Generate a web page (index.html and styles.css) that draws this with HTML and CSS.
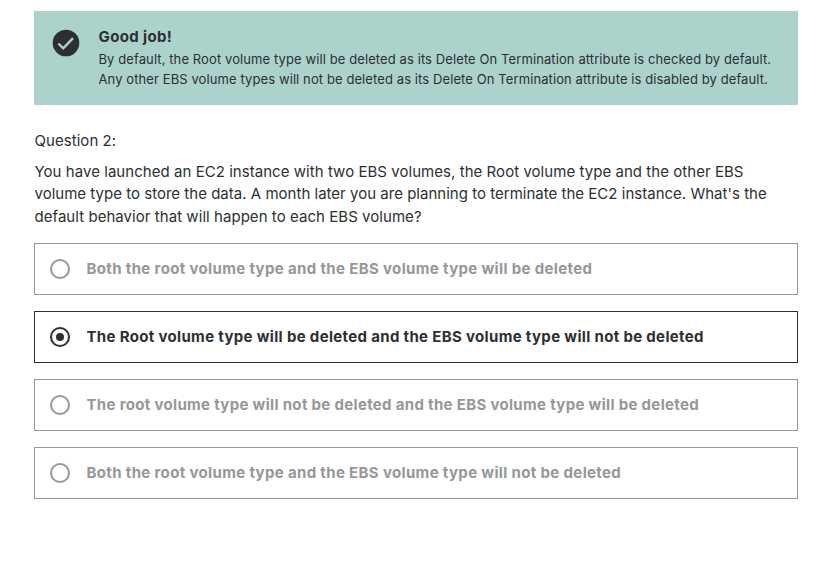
FILE: index.html
```html
<!DOCTYPE html>
<html lang="en">
<head>
<meta charset="utf-8">
<title>Quiz</title>
<link rel="stylesheet" href="styles.css">
</head>
<body>
<main class="quiz">
  <section class="alert">
    <svg class="alert-icon" viewBox="0 0 28 28"><circle cx="14" cy="14" r="13.3"/><path d="M6.4 14.5l4.8 4.8L21 9.1"/></svg>
    <div class="alert-body">
      <h2 class="alert-title"><span class="line">Good job!</span></h2>
      <p class="alert-text"><span class="line">By default, the Root volume type will be deleted as its Delete On Termination attribute is checked by default.</span><span class="line">Any other EBS volume types will not be deleted as its Delete On Termination attribute is disabled by default.</span></p>
    </div>
  </section>
  <div class="question-label"><span class="line">Question 2:</span></div>
  <p class="question"><span class="line q1">You have launched an EC2 instance with two EBS volumes, the Root volume type and the other EBS</span><span class="line q2">volume type to store the data. A month later you are planning to terminate the EC2 instance. What's the</span><span class="line q3">default behavior that will happen to each EBS volume?</span></p>
  <div class="options">
    <div class="option"><span class="radio"></span><span class="line o1">Both the root volume type and the EBS volume type will be deleted</span></div>
    <div class="option selected"><span class="radio"></span><span class="line o2">The Root volume type will be deleted and the EBS volume type will not be deleted</span></div>
    <div class="option"><span class="radio"></span><span class="line o3">The root volume type will not be deleted and the EBS volume type will be deleted</span></div>
    <div class="option"><span class="radio"></span><span class="line o4">Both the root volume type and the EBS volume type will not be deleted</span></div>
  </div>
</main>
</body>
</html>
```
FILE: styles.css
```css
* { box-sizing: border-box; }
body { margin: 0; background: #fff; color: #2d2f31; font-family: Inter, "Liberation Sans", sans-serif; }
h2, p { margin: 0; }
.quiz { width: 764px; margin-left: 34px; padding-top: 11px; }
.line { display: block; width: max-content; white-space: nowrap; }
.alert { display: flex; height: 94px; padding: 16px 18px; gap: 18.5px; background: #acd2cc; }
.alert-icon { width: 28px; height: 28px; margin-top: 2px; flex: none; }
.alert-icon circle { fill: #2d2f31; }
.alert-icon path { fill: none; stroke: #acd2cc; stroke-width: 2.4; }
.alert-title { font-size: 15px; line-height: 20px; font-weight: 700; letter-spacing: 0.37px; }
.alert-text { font-size: 13px; line-height: 20px; padding-top: 2px; letter-spacing: 0.097px; }
.question-label { margin-top: 25px; padding-left: 0.5px; font-size: 15px; line-height: 22px; letter-spacing: 0.05px; }
.question { margin-top: 9px; padding-left: 0.5px; font-size: 15px; line-height: 22.4px; }
.q1 { letter-spacing: 0.046px; }
.q2 { letter-spacing: 0.016px; }
.q3 { letter-spacing: 0.05px; }
.options { display: flex; flex-direction: column; gap: 16px; margin-top: 15px; }
.option { display: flex; align-items: center; height: 52px; padding-left: 15px; gap: 16.5px; border: 1px solid #989898; color: #969798; font-size: 15px; font-weight: 700; }
.option .line { padding-bottom: 2px; }
.o1 { letter-spacing: 0.35px; }
.o2 { letter-spacing: 0.333px; }
.o3 { letter-spacing: 0.322px; }
.o4 { letter-spacing: 0.347px; }
.radio { display: grid; place-items: center; width: 20px; height: 20px; border: 2px solid #969798; border-radius: 50%; }
.selected { border-color: #2d2f31; color: #2d2f31; }
.selected .radio { border-color: #2d2f31; }
.selected .radio::after { content: ""; width: 8px; height: 8px; border-radius: 50%; background: #2d2f31; }
```
